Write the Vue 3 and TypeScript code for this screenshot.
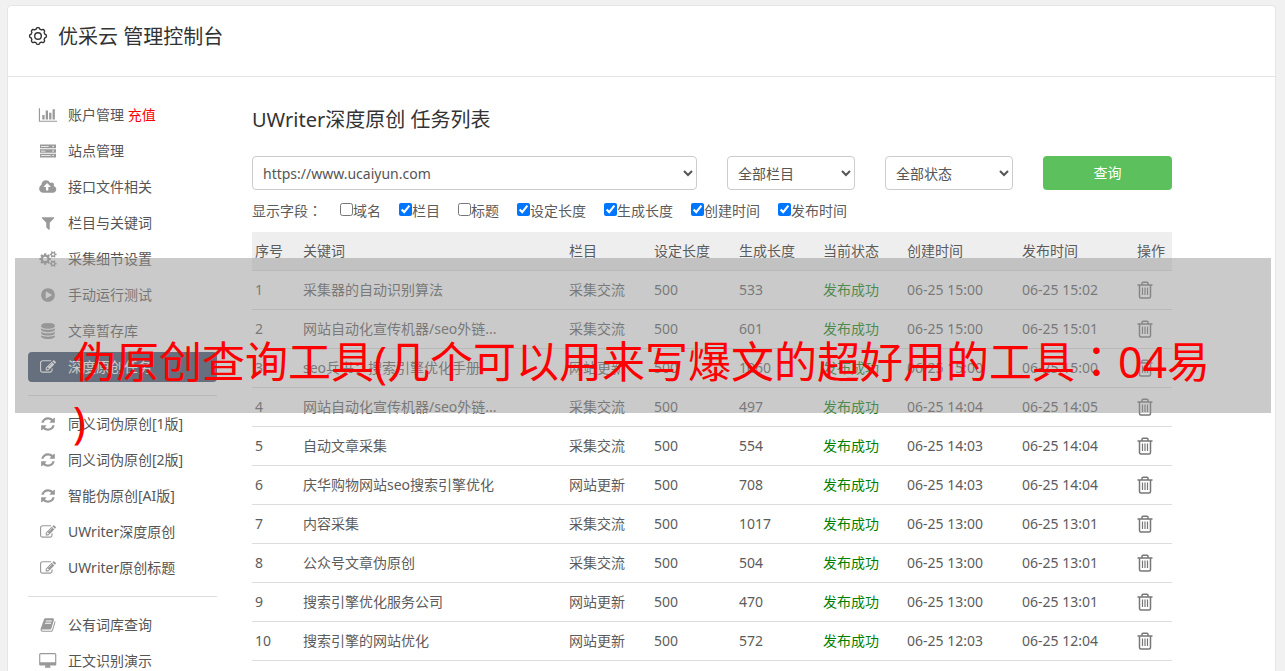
<script setup lang="ts">
import { ref } from 'vue'

interface Icon {
  width: number
  path: string
}

interface MenuItem {
  label: string
  icon: string
  badge?: string
  active?: boolean
}

interface Task {
  id: number
  keyword: string
  column: string
  target: number
  length: number
  created: string
  published: string
}

const smallGear =
  'v140q0 16-149 31-12 27-30 52 51 113 51 138 0 4-4 7-122 71-124 71-8 0-46-47t-52-68q-20 2-30 2t-30-2q-14 21-52 68t-46 47q-2 0-124-71-4-3-4-7 0-25 51-138-18-25-30-52-149-15-149-31v-140q0-16 149-31 13-29 30-52-51-113-51-138 0-4 4-7 4-2 35-20t59-34 30-16q8 0 46 46.5t52 67.5q20-2 30-2t30 2q51-71 92-112l6-2q4 0 124 70 4 3 4 7 0 25-51 138 17 23 30 52 149 15 149 31z'

const databaseBand =
  'q237 0 443-43t325-127v170q0 69-103 128t-280 93.5-385 34.5-385-34.5-280-93.5-103-128v-170q119 84 325 127t443 43z'

const icons: Record<string, Icon> = {
  chart: {
    width: 2048,
    path: 'M640 896v512h-256v-512h256zm384-512v1024h-256v-1024h256zm1024 1152v128h-2048v-1536h128v1408h1920zm-640-896v768h-256v-768h256zm384-384v1152h-256v-1152h256z',
  },
  server: {
    width: 1792,
    path: 'M0 180h1792v400h-1792zM110 345v80h860v-80zM1380 380a85 85 0 1 0 170 0a85 85 0 1 0-170 0zM0 696h1792v400h-1792zM110 860v80h500v-80zM1380 896a85 85 0 1 0 170 0a85 85 0 1 0-170 0zM0 1212h1792v400h-1792zM110 1375v80h1100v-80zM1380 1412a85 85 0 1 0 170 0a85 85 0 1 0-170 0z',
  },
  upload: {
    width: 1856,
    path: 'M1216 864q0-14-9-23l-352-352q-9-9-23-9t-23 9l-351 351q-10 12-10 24 0 14 9 23t23 9h224v352q0 13 9.5 22.5t22.5 9.5h192q13 0 22.5-9.5t9.5-22.5v-352h224q13 0 22.5-9.5t9.5-22.5zm640 288q0 159-112.5 271.5t-271.5 112.5h-1088q-185 0-316.5-131.5t-131.5-316.5q0-130 70-240t188-165q-2-30-2-43 0-212 150-362t362-150q156 0 285.5 87t188.5 231q71-62 166-62 106 0 181 75t75 181q0 76-41 138 130 31 213.5 135.5t83.5 238.5z',
  },
  filter: {
    width: 1792,
    path: 'M1595 295q17 41-14 70l-493 493v742q0 42-39 59-13 5-25 5-27 0-45-19l-256-256q-19-19-19-45v-486l-493-493q-31-29-14-70 17-39 59-39h1280q42 0 59 39z',
  },
  cogs: {
    width: 1920,
    path:
      'M896 896q0-106-75-181t-181-75-181 75-75 181 75 181 181 75 181-75 75-181zm768 512q0-52-38-90t-90-38-90 38-38 90q0 53 37.5 90.5t90.5 37.5 90.5-37.5 37.5-90.5zm0-1024q0-52-38-90t-90-38-90 38-38 90q0 53 37.5 90.5t90.5 37.5 90.5-37.5 37.5-90.5zm-384 421v185q0 10-7 19.5t-16 10.5l-155 24q-11 35-32 76 34 48 90 115 7 11 7 20 0 12-7 19-23 30-82.5 89.5t-78.5 59.5q-11 0-21-7l-115-90q-37 19-77 31-11 108-23 155-7 24-30 24h-186q-11 0-20-7.5t-10-17.5l-23-153q-34-10-75-31l-118 89q-7 7-20 7-11 0-21-8-144-133-144-160 0-9 7-19 10-14 41-53t47-61q-23-44-35-82l-152-24q-10-1-17-9.5t-7-19.5v-185q0-10 7-19.5t16-10.5l155-24q11-35 32-76-34-48-90-115-7-11-7-20 0-12 7-20 22-30 82-89t79-59q11 0 21 7l115 90q34-18 77-32 11-108 23-154 7-24 30-24h186q11 0 20 7.5t10 17.5l23 153q34 10 75 31l118-89q8-7 20-7 11 0 21 8 144 133 144 160 0 8-7 19-12 16-42 54t-45 60q23 48 34 82l152 23q10 2 17 10.5t7 19.5z' +
      'M1920 1338' + smallGear + 'M1920 314' + smallGear,
  },
  play: {
    width: 1792,
    path: 'M896 128q209 0 385.5 103t279.5 279.5 103 385.5-103 385.5-279.5 279.5-385.5 103-385.5-103-279.5-279.5-103-385.5 103-385.5 279.5-279.5 385.5-103zm384 823q32-18 32-55t-32-55l-544-320q-31-19-64-1-32 19-32 56v640q0 37 32 56 16 8 32 8 17 0 32-9z',
  },
  database: {
    width: 1792,
    path:
      'M896 768' + databaseBand + 'M896 1536' + databaseBand + 'M896 1152' + databaseBand +
      'M896 0q208 0 385 34.5t280 93.5 103 128v128q0 69-103 128t-280 93.5-385 34.5-385-34.5-280-93.5-103-128v-128q0-69 103-128t280-93.5 385-34.5z',
  },
  edit: {
    width: 1792,
    path: 'M888 1184l116-116-152-152-116 116v56h96v96h56zm440-720q-16-16-33 1l-350 350q-17 17-1 33t33-1l350-350q17-17 1-33zm80 594v190q0 119-84.5 203.5t-203.5 84.5h-832q-119 0-203.5-84.5t-84.5-203.5v-832q0-119 84.5-203.5t203.5-84.5h832q63 0 117 25 15 7 18 23 3 17-9 29l-49 49q-14 14-32 8-23-6-45-6h-832q-66 0-113 47t-47 113v832q0 66 47 113t113 47h832q66 0 113-47t47-113v-126q0-13 9-22l64-64q15-15 35-7t20 29zm-96-738l288 288-672 672h-288v-288zm444 132l-92 92-288-288 92-92q28-28 68-28t68 28l152 152q28 28 28 68t-28 68z',
  },
  refresh: {
    width: 1792,
    path: 'M1639 1056q0 5-1 7-64 268-268 434.5t-478 166.5q-146 0-282.5-55t-243.5-157l-129 129q-19 19-45 19t-45-19-19-45v-448q0-26 19-45t45-19h448q26 0 45 19t19 45-19 45l-137 137q71 66 161 102t187 36q134 0 250-65t186-179q11-17 53-117 8-23 30-23h192q13 0 22.5 9.5t9.5 22.5zm25-800v448q0 26-19 45t-45 19h-448q-26 0-45-19t-19-45 19-45l138-138q-148-137-349-137-134 0-250 65t-186 179q-11 17-53 117-8 23-30 23h-199q-13 0-22.5-9.5t-9.5-22.5v-7q65-268 270-434.5t480-166.5q146 0 284 55.5t245 156.5l130-129q19-19 45-19t45 19 19 45z',
  },
  book: {
    width: 1792,
    path: 'M1703 478q40 57 18 129l-275 906q-19 64-76.5 107.5t-122.5 43.5h-923q-77 0-148.5-53.5t-99.5-131.5q-24-67-2-127 0-4 3-27t4-37q1-8-3-21.5t-3-19.5q2-11 8-21t16.5-23.5 16.5-23.5q23-38 45-91.5t30-91.5q3-10 .5-30t-.5-28q3-11 17-28t17-23q21-36 42-92t25-90q1-9-2.5-32t.5-28q4-13 22-30.5t22-22.5q19-26 42.5-84.5t27.5-96.5q1-8-3-25.5t-2-26.5q2-8 9-18t18-23 17-21q8-12 16.5-30.5t15-35 16-36 19.5-32 26.5-23.5 36-11.5 47.5 5.5l-1 3q38-9 51-9h761q74 0 114 56t18 130l-274 906q-36 119-71.5 153.5t-128.5 34.5h-869q-27 0-38 15-11 16-1 43 24 70 144 70h923q29 0 56-15.5t35-41.5l300-987q7-22 5-57 38 15 59 43zm-1064 2q-4 13 2 22.5t20 9.5h608q13 0 25.5-9.5t16.5-22.5l21-64q4-13-2-22.5t-20-9.5h-608q-13 0-25.5 9.5t-16.5 22.5zm-83 256q-4 13 2 22.5t20 9.5h608q13 0 25.5-9.5t16.5-22.5l21-64q4-13-2-22.5t-20-9.5h-608q-13 0-25.5 9.5t-16.5 22.5z',
  },
  desktop: {
    width: 1856,
    path: 'M1728 992v-832q0-13-9.5-22.5t-22.5-9.5h-1600q-13 0-22.5 9.5t-9.5 22.5v832q0 13 9.5 22.5t22.5 9.5h1600q13 0 22.5-9.5t9.5-22.5zm128-832v1088q0 66-47 113t-113 47h-544q0 37 16 77.5t32 71 16 43.5q0 26-19 45t-45 19h-512q-26 0-45-19t-19-45q0-14 16-44t32-70 16-78h-544q-66 0-113-47t-47-113v-1088q0-66 47-113t113-47h1600q66 0 113 47t47 113z',
  },
}

const menu: MenuItem[][] = [
  [
    { label: '账户管理', icon: 'chart', badge: '充值' },
    { label: '站点管理', icon: 'server' },
    { label: '接口文件相关', icon: 'upload' },
    { label: '栏目与关键词', icon: 'filter' },
    { label: '采集细节设置', icon: 'cogs' },
    { label: '手动运行测试', icon: 'play' },
    { label: '文章暂存库', icon: 'database' },
    { label: '深度原创任务', icon: 'edit', active: true },
  ],
  [
    { label: '同义词伪原创[1版]', icon: 'refresh' },
    { label: '同义词伪原创[2版]', icon: 'refresh' },
    { label: '智能伪原创[AI版]', icon: 'refresh' },
    { label: 'UWriter深度原创', icon: 'edit' },
    { label: 'UWriter原创标题', icon: 'edit' },
  ],
  [
    { label: '公有词库查询', icon: 'book' },
    { label: '正文识别演示', icon: 'desktop' },
  ],
]

const fields = ref([
  { label: '域名', checked: false },
  { label: '栏目', checked: true },
  { label: '标题', checked: false },
  { label: '设定长度', checked: true },
  { label: '生成长度', checked: true },
  { label: '创建时间', checked: true },
  { label: '发布时间', checked: true },
])

function task(id: number, keyword: string, column: string, length: number, created: string, published: string): Task {
  return { id, keyword, column, target: 500, length, created: '06-25 ' + created, published: '06-25 ' + published }
}

const tasks: Task[] = [
  task(1, '采集器的自动识别算法', '采集交流', 533, '15:00', '15:02'),
  task(2, '网站自动化宣传机器/seo外链...', '采集交流', 601, '15:00', '15:01'),
  task(3, 'seo兵书：搜索引擎优化手册', '网站更新', 1060, '15:00', '15:00'),
  task(4, '网站自动化宣传机器/seo外链...', '采集交流', 497, '14:04', '14:05'),
  task(5, '自动文章采集', '采集交流', 554, '14:03', '14:04'),
  task(6, '庆华购物网站seo搜索引擎优化', '网站更新', 708, '14:03', '14:04'),
  task(7, '内容采集', '采集交流', 1017, '13:00', '13:01'),
  task(8, '公众号文章伪原创', '采集交流', 504, '13:00', '13:01'),
  task(9, '搜索引擎优化服务公司', '网站更新', 470, '13:00', '13:01'),
  task(10, '搜索引擎的网站优化', '网站更新', 572, '12:03', '12:04'),
]

// Outline of an eight-toothed gear with rounded teeth.
const gearOutline = (() => {
  const points: string[] = []
  for (let i = 0; i < 160; i++) {
    const a = (i / 160) * Math.PI * 2
    const r = 7.7 + 0.7 * Math.tanh(2.2 * Math.cos(8 * a))
    points.push((10 + r * Math.cos(a)).toFixed(2) + ' ' + (10 + r * Math.sin(a)).toFixed(2))
  }
  return 'M' + points.join('L') + 'Z'
})()
</script>

<template>
  <div class="page">
    <div class="card">
      <header class="card-header">
        <svg class="gear" viewBox="0 0 20 20" aria-hidden="true">
          <path :d="gearOutline" />
          <circle cx="10" cy="10" r="3.3" />
        </svg>
        <h1>优采云 管理控制台</h1>
      </header>

      <div class="body">
        <nav class="sidebar">
          <ul v-for="(group, g) in menu" :key="g">
            <li v-for="item in group" :key="item.label">
              <a href="#" :class="{ active: item.active }">
                <svg class="menu-icon" :viewBox="`0 0 ${icons[item.icon].width} 1792`" aria-hidden="true">
                  <path fill-rule="evenodd" :d="icons[item.icon].path" />
                </svg>
                <span>{{ item.label }} <span v-if="item.badge" class="badge">{{ item.badge }}</span></span>
              </a>
            </li>
          </ul>
        </nav>

        <main class="main">
          <h2>UWriter深度原创 任务列表</h2>

          <form class="filters" @submit.prevent>
            <select aria-label="站点"><option>https://www.ucaiyun.com</option></select>
            <select aria-label="栏目"><option>全部栏目</option></select>
            <select aria-label="状态"><option>全部状态</option></select>
            <button type="submit">查询</button>
          </form>

          <div class="fields">
            <span>显示字段<span class="colon">：</span></span>
            <label v-for="field in fields" :key="field.label">
              <input v-model="field.checked" type="checkbox" />{{ field.label }}
            </label>
          </div>

          <table>
            <colgroup>
              <col class="c-id" />
              <col />
              <col class="c-wide" />
              <col class="c-wide" />
              <col class="c-mid" />
              <col class="c-mid" />
              <col class="c-time" />
              <col class="c-time" />
              <col class="c-action" />
            </colgroup>
            <thead>
              <tr>
                <th>序号</th>
                <th>关键词</th>
                <th>栏目</th>
                <th>设定长度</th>
                <th>生成长度</th>
                <th>当前状态</th>
                <th>创建时间</th>
                <th>发布时间</th>
                <th>操作</th>
              </tr>
            </thead>
            <tbody>
              <tr v-for="row in tasks" :key="row.id">
                <td>{{ row.id }}</td>
                <td>{{ row.keyword }}</td>
                <td>{{ row.column }}</td>
                <td>{{ row.target }}</td>
                <td>{{ row.length }}</td>
                <td class="ok">发布成功</td>
                <td>{{ row.created }}</td>
                <td>{{ row.published }}</td>
                <td>
                  <button class="trash" type="button" aria-label="删除">
                    <svg viewBox="0 0 16 18" aria-hidden="true">
                      <path d="M0.500 4h15M5 4v-1.700q0-1 1-1h4q1 0 1 1v1.700M2.500 4v11.500q0 1.500 1.500 1.500h8q1.500 0 1.500-1.500v-11.500" />
                      <path class="slats" d="M5.500 6.500v7.500M8 6.500v7.500M10.500 6.500v7.500" />
                    </svg>
                  </button>
                </td>
              </tr>
            </tbody>
          </table>
        </main>
      </div>
    </div>

    <div class="banner">
      <p>伪原创查询工具(几个可以用来写爆文的超好用的工具<span class="colon">：</span>04易<br />)</p>
    </div>
  </div>
</template>

<style>
body {
  margin: 0;
  background: #f1f1f1;
  overflow: hidden;
}
</style>

<style scoped>
* {
  box-sizing: border-box;
}

.page {
  position: relative;
  height: 100vh;
  overflow: hidden;
  padding: 5px 9px 0 7px;
  font-family: 'Noto Sans', 'Noto Sans CJK SC', sans-serif;
  font-size: 14px;
  line-height: 20px;
  color: #5c5c5c;
}

.card {
  background: #fff;
  border: 1px solid #e5e5e5;
  border-radius: 4px;
}

.card-header {
  display: flex;
  align-items: flex-start;
  gap: 10px;
  height: 71px;
  padding: 16px 20px 0;
  border-bottom: 1px solid #e5e5e5;
}

.gear {
  width: 20px;
  height: 20px;
  margin-top: 4px;
  fill: none;
  stroke: #333;
  stroke-width: 1.4;
}

h1,
h2 {
  margin: 0;
  font-size: 20px;
  line-height: 30px;
  font-weight: 400;
  color: #333;
}

.colon {
  font-family: 'Noto Sans CJK TC', sans-serif;
}

.body {
  display: flex;
  gap: 35px;
  padding: 23px 20px 20px;
}

.sidebar {
  flex: 0 0 189px;
}

ul {
  display: flex;
  flex-direction: column;
  gap: 6px;
  margin: 0;
  padding: 0;
  list-style: none;
}

ul + ul {
  margin-top: 13px;
  padding-top: 13px;
  border-top: 1px solid #ddd;
}

.sidebar a {
  display: flex;
  align-items: center;
  gap: 10px;
  height: 30px;
  padding: 0 10px;
  border-radius: 4px;
  color: #555;
  text-decoration: none;
  white-space: nowrap;
}

.menu-icon {
  width: 20px;
  height: 16px;
  fill: #999;
}

.sidebar a.active {
  background: #364966;
  color: #fff;
}

.active .menu-icon {
  fill: #fff;
}

.badge {
  color: #f00;
}

.main {
  flex: 1;
  min-width: 0;
  max-width: 920px;
  padding-top: 5px;
}

.filters {
  display: grid;
  grid-template-columns: 445fr 128fr 128fr 129fr;
  gap: 30px;
  margin-top: 21px;
}

select {
  width: 100%;
  height: 34px;
  padding: 0 6px;
  border: 1px solid #ccc;
  border-radius: 4px;
  background-color: #fff;
  color: #555;
  font: inherit;
}

.filters button {
  height: 34px;
  padding: 0;
  border: 0;
  border-radius: 4px;
  background: #5cc05c;
  color: #fff;
  font: inherit;
}

.fields {
  display: flex;
  gap: 18px;
  margin-top: 10px;
  white-space: nowrap;
}

.fields label {
  display: flex;
  align-items: center;
}

.fields input {
  width: 13px;
  height: 13px;
  margin: 0 0 3px;
}

table {
  width: 100%;
  margin-top: 11px;
  border-collapse: separate;
  border-spacing: 0;
  table-layout: fixed;
}

.c-id {
  width: 48px;
}

.c-wide {
  width: 85px;
}

.c-mid {
  width: 84px;
}

.c-time {
  width: 115px;
}

.c-action {
  width: 38px;
}

th,
td {
  height: 39px;
  padding: 0 0 0 3px;
  border-bottom: 1px solid #ddd;
  font-weight: 400;
  text-align: left;
  white-space: nowrap;
}

th {
  background: #eee;
}

.ok {
  color: #008000;
}

.trash {
  display: block;
  padding: 0;
  border: 0;
  background: none;
}

.trash svg {
  display: block;
  width: 16px;
  height: 18px;
  fill: none;
  stroke: #777;
  stroke-width: 1.5;
}

.trash .slats {
  stroke-width: 1.2;
}

.banner {
  position: absolute;
  top: 258px;
  left: 15px;
  right: 14px;
  height: 155px;
  padding: 71px 0 0 58px;
  background: rgba(150, 150, 150, 0.5);
  color: #f00;
  font-size: 43px;
  line-height: 60px;
  white-space: nowrap;
}

.banner p {
  margin: 0;
}
</style>
